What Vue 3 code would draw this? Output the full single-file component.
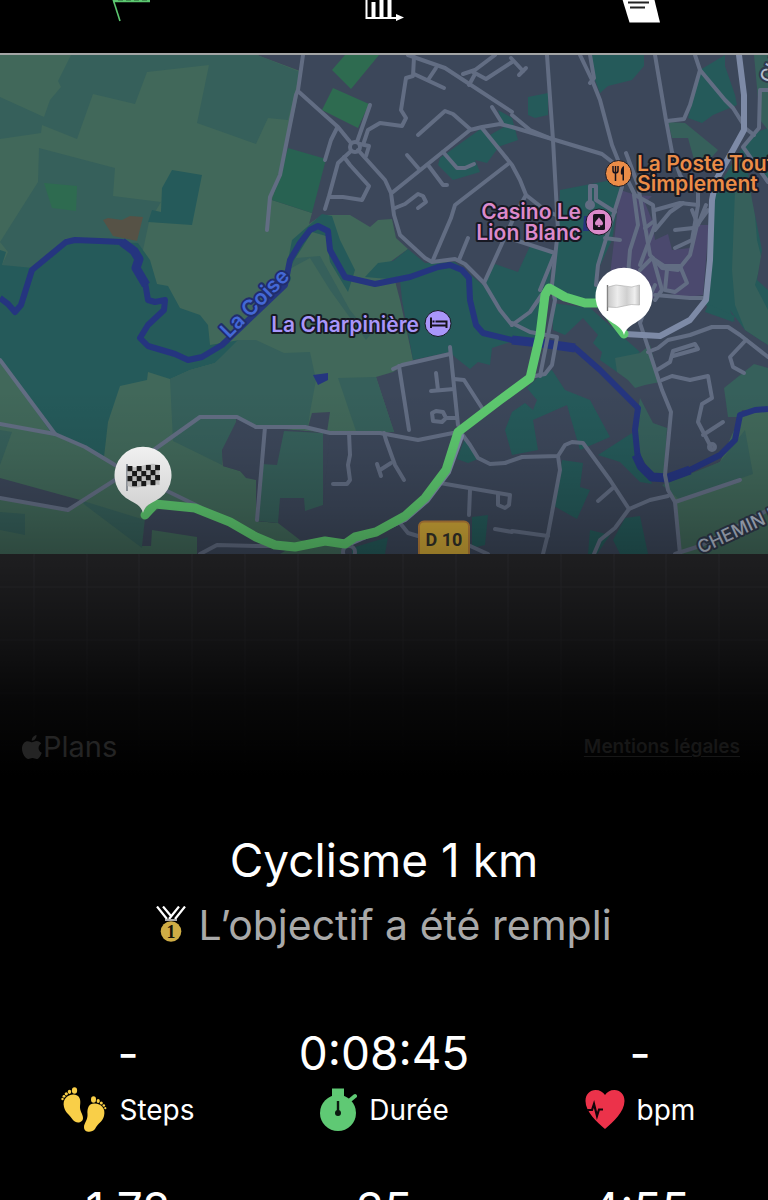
<template>
  <main class="app">
    <nav class="tabs" aria-label="Sections">
      <button type="button" class="tab active" aria-label="Parcours">
        <svg width="56" height="24" viewBox="100 0 56 24">
          <path d="M112 -4L120 21" stroke="#5cc770" stroke-width="1.6" fill="none" />
          <path d="M113 1H150" stroke="#5cc770" stroke-width="2.4" />
          <path d="M118 0H149" stroke="#245c30" stroke-width="1" stroke-dasharray="5 3" />
        </svg>
      </button>
      <button type="button" class="tab" aria-label="Statistiques">
        <svg width="56" height="24" viewBox="356 0 56 24">
          <path d="M366.5 0V18H397" stroke="#fff" stroke-width="2" fill="none" />
          <path d="M373.500 2V17M381.500 0V17M389.500 0V17" stroke="#fff" stroke-width="4" />
          <path d="M396 14L404 17.500L396 21Z" fill="#fff" />
        </svg>
      </button>
      <button type="button" class="tab" aria-label="Notes">
        <svg width="56" height="24" viewBox="612 0 56 24">
          <path d="M622 -2H654L660 22.500H629.500Z" fill="#fff" />
          <path d="M628 2.500H649M630 7.500H645" stroke="#222" stroke-width="2" />
        </svg>
      </button>
    </nav>

    <section class="map">
      <svg class="map-canvas" viewBox="0 55 768 725">
        <defs>
          <linearGradient id="fade" gradientUnits="userSpaceOnUse" x1="0" y1="390" x2="0" y2="775">
            <stop offset="0" stop-color="#000" stop-opacity="0" />
            <stop offset=".15" stop-color="#000" stop-opacity=".06" />
            <stop offset=".31" stop-color="#000" stop-opacity=".18" />
            <stop offset=".43" stop-color="#000" stop-opacity=".3" />
            <stop offset=".65" stop-color="#000" stop-opacity=".58" />
            <stop offset=".81" stop-color="#000" stop-opacity=".83" />
            <stop offset="1" stop-color="#000" />
          </linearGradient>
          <linearGradient id="cloth" x1="0" x2="1" y1="0" y2="0">
            <stop offset="0" stop-color="#c9c9c9" />
            <stop offset=".3" stop-color="#ececec" />
            <stop offset=".6" stop-color="#cfcfcf" />
            <stop offset=".85" stop-color="#efefef" />
            <stop offset="1" stop-color="#c4c4c4" />
          </linearGradient>
          <clipPath id="tiles"><rect x="0" y="55" width="768" height="499" /></clipPath>
        </defs>

        <rect x="0" y="554" width="768" height="226" fill="#2b2b2e" />
        <path v-for="x in gridX" :key="'x' + x" :d="`M${x} 554V780`" class="grid" />
        <path v-for="y in gridY" :key="'y' + y" :d="`M0 ${y}H768`" class="grid" />

        <g clip-path="url(#tiles)">
          <rect x="0" y="55" width="768" height="499" fill="#3c475a" />
          <polygon v-for="(zone, i) in zones" :key="'z' + i" :points="zone[1]" :class="zone[0]" />
          <polyline :points="river" class="river" />
          <polyline points="122,242 134,251 139,259 136,268 146,285" class="river wide" />
          <polyline points="512,340 540,343 575,348" class="river wide" />
          <polyline points="636,455 641,466 652,477 668,478 690,470" class="river wide" />
          <polyline v-for="(road, i) in roads" :key="'r' + i" :points="road" class="road" />
          <circle v-for="c in roundabouts" :key="c[0]" :cx="c[0]" :cy="c[1]" :r="c[2]" class="road" />
          <polyline v-for="(road, i) in mainRoads" :key="'m' + i" :points="road" class="road main" />
          <polyline :points="route" class="route" />

          <g class="label river-name"><text transform="translate(229 339) rotate(-45)">La Coise</text></g>
          <g class="label street">
            <text transform="translate(701 554) rotate(-25)">CHEMIN DE</text>
            <text transform="translate(770 84) rotate(-62)">CHEMIN</text>
          </g>

          <g class="label hotel">
            <text x="419" y="332" text-anchor="end">La Charpinière</text>
            <circle cx="438" cy="323.500" r="13" />
            <path d="M431 317.500V328M431 325.500H446.500V328M446.500 325.500V321.500H435.500M432.500 321.500H434.500" class="glyph" />
          </g>
          <g class="label casino">
            <text x="581" y="219" text-anchor="end">Casino Le</text>
            <text x="581" y="240" text-anchor="end">Lion Blanc</text>
            <circle cx="599" cy="222" r="13" />
            <rect x="593" y="214" width="12" height="16" rx="1.500" fill="#17121c" stroke="none" />
            <path d="M599 217C598 219.500 595 221 595 223.500C595 225.500 597.500 226 598.500 224.700L597.700 227H600.300L599.500 224.700C600.500 226 603 225.500 603 223.500C603 221 600 219.500 599 217Z" />
          </g>
          <g class="label food">
            <text x="637" y="171">La Poste Tout</text>
            <text x="637" y="191">Simplement</text>
            <circle cx="618.500" cy="173.500" r="13" />
            <path d="M613 166V170.500Q613 173 615.500 173T618 170.500V166M615.500 166V181" class="glyph thin" />
            <path d="M624 166C621 167 620.500 171 621 174.500H622.500V180.500H624Z" fill="#17121c" />
          </g>
          <g>
            <rect x="419" y="521.500" width="50" height="40" rx="5" fill="#d1a938" stroke="#b9803a" stroke-width="2" />
            <text x="444" y="546" text-anchor="middle" class="badge">D 10</text>
          </g>

          <g class="pin">
            <path d="M143 513C141 505 134 503 126 498A28.500 28.500 0 1 1 160 498C152 503 145 505 143 513Z" />
            <path d="M127 464V491" stroke="#8b929c" stroke-width="1.600" />
            <path d="M127.500 466Q135 468.500 143 465.500T159.500 465V485Q151 483 143 486T127.500 486Z" fill="#d4d4d4" />
            <rect v-for="s in checks" :key="s.x + '-' + s.y" :x="s.x" :y="s.y" width="4.900" height="5.200" fill="#1c1c1c" />
          </g>
          <g class="pin">
            <path d="M624 335C622 327 615 325 607 319A28.500 28.500 0 1 1 641 319C633 325 626 327 624 335Z" />
            <path d="M607.500 285V311" stroke="#777" stroke-width="1.400" />
            <path d="M608 287Q616 283.500 624 286T639.500 285V305Q631 303.500 624 306T608 307Z" fill="url(#cloth)" stroke="#aaa" stroke-width=".6" />
          </g>
        </g>

        <rect x="0" y="390" width="768" height="390" fill="url(#fade)" />
      </svg>

      <footer class="credits">
        <span class="brand">
          <svg width="20" height="25" viewBox="0 0 20 25">
            <path d="M14.500 0C14.800 3 12.400 5.800 9.800 5.700C9.500 3 12 .3 14.500 0ZM10 7.300C11.200 7.300 12.500 6 14.700 6C16.600 6 18.200 7 19.200 8.400C15.300 10.700 16 16.200 19.800 17.700C18.800 20.500 16.900 24 14.700 24C13.100 24 12.500 23 10.500 23C8.500 23 7.900 24 6.400 24C3.500 24 0 18.500 0 13.500C0 8.800 2.900 6.200 5.700 6.200C7.600 6.200 9 7.300 10 7.300Z" />
          </svg>
          <span>Plans</span>
        </span>
        <a href="#mentions">Mentions légales</a>
      </footer>
    </section>

    <section class="summary">
      <h1>Cyclisme 1 km</h1>
      <p class="goal">
        <svg width="30" height="38" viewBox="0 0 30 38">
          <path d="M1 .5L11 13M7 .5L15 10M29 .5L19 13M23 .5L13 13" stroke="#fff" stroke-width="2.200" />
          <path d="M9 14H21" stroke="#aaa" stroke-width="2" />
          <circle cx="15" cy="25.500" r="10.300" fill="#cfad45" />
          <text x="15" y="32" text-anchor="middle" class="rank">1</text>
        </svg>
        <span>L’objectif a été rempli</span>
      </p>
    </section>

    <section class="stats">
      <div class="stat">
        <div class="value">-</div>
        <div class="name">
          <svg width="46" height="46" viewBox="0 0 46 46" fill="#f9cf48">
            <path d="M3 20C1 12 7 7 13 7.500C19 8 20 13 19 19C18.500 24 22 27 22 31C22 36 15 37 12 33C8 27 4.500 26 3 20Z" />
            <ellipse cx="13.500" cy="3.500" rx="2.600" ry="3.300" />
            <ellipse cx="8.500" cy="4.800" rx="1.700" ry="2.100" />
            <circle cx="5.300" cy="6.800" r="1.600" />
            <circle cx="3" cy="9.300" r="1.400" />
            <circle cx="1.500" cy="12" r="1.200" />
            <path d="M43 29C45 21 40 17 34 16.500C28 16 26 21 26.500 27C27 33 23 36 23 40C23 46 31 46 34 42C37 36 41.500 35 43 29Z" />
            <ellipse cx="32.500" cy="12.500" rx="2.500" ry="3.200" />
            <ellipse cx="37.200" cy="14" rx="1.600" ry="2.100" />
            <circle cx="40.300" cy="16" r="1.500" />
            <circle cx="42.800" cy="18.500" r="1.300" />
            <circle cx="44.300" cy="21.200" r="1.100" />
          </svg>
          <span>Steps</span>
        </div>
      </div>
      <div class="stat">
        <div class="value">0:08:45</div>
        <div class="name">
          <svg width="38" height="46" viewBox="0 0 38 46">
            <path d="M13 1.500H25V12H13Z" fill="#5fc974" />
            <circle cx="19" cy="26" r="18" fill="#5fc974" />
            <path d="M30 14L36 9" stroke="#5fc974" stroke-width="4" stroke-linecap="round" />
            <path d="M19 14V25" stroke="#0c1a10" stroke-width="2.400" />
            <circle cx="19" cy="26" r="3" fill="#0c1a10" />
          </svg>
          <span>Durée</span>
        </div>
      </div>
      <div class="stat">
        <div class="value">-</div>
        <div class="name">
          <svg width="40" height="46" viewBox="0 0 40 46">
            <path d="M20 42C12 35 .5 25 .5 14C.5 7 5 3 10.500 3C15 3 18 5 20 8C22 5 25 3 29.500 3C35 3 39.500 7 39.500 14C39.500 25 28 35 20 42Z" fill="#ec324a" />
            <path d="M2 23H7L9 17L12 29L14 22.500H18" fill="none" stroke="#120408" stroke-width="2.200" />
          </svg>
          <span>bpm</span>
        </div>
      </div>
      <div class="stat"><div class="value">1,78</div></div>
      <div class="stat"><div class="value">35</div></div>
      <div class="stat"><div class="value">4:55</div></div>
    </section>
  </main>
</template>

<script setup>
// Cuadricula vacia debajo de las teselas
const gridX = Array.from({ length: 14 }, (_, i) => 34 + Math.round(i * 52.7))
const gridY = [587, 640, 693, 745]

// Zonas del mapa: [clase, puntos]
const zones = [
  ['field', '0,55 257,55 300,71 298,95 280,178 272,200 312,213 309,224 322,215 350,215 370,227 378,220 392,219 396,238 408,249 390,262 400,300 413,360 393,372 376,377 394,432 330,433 256,427 236,418 235,435 222,450 223,466 240,471 246,478 256,480 257,521 278,523 300,540 345,545 345,554 0,554'],
  ['meadow', '71,55 58,81 61,87 50,100 44,117 0,97 0,139 41,133 42,125 77,139 93,94 135,104 147,72 209,65 197,123 256,144 268,118 288,120 300,72 257,55'],
  ['meadow', '39,148 115,168 113,196 161,202 149,222 143,250 125,240 66,238 33,270 2,265 8,252 0,242 38,182'],
  ['wood', '0,250 6,252 2,265 33,268 66,240 138,243 150,260 157,284 168,286 180,308 200,315 208,325 210,345 240,340 215,363 190,370 170,379 148,372 147,380 120,386 108,422 104,457 52,434 0,360'],
  ['meadow', '170,379 190,370 215,363 238,340 256,340 284,353 310,352 316,380 310,412 308,427 256,427 236,418 234,440 222,450 222,465 173,441'],
  ['meadow', '338,378 376,377 394,432 356,431'],
  ['meadow', '284,272 296,258 320,256 350,310 370,335 366,340 330,290 310,258'],
  ['town', '312,413 330,412 327,432 308,427'],
  ['meadow', '0,430 12,432 0,465'],
  ['town', '0,478 80,500 68,511 0,498'],
  ['meadow', '0,512 25,514 25,535 0,530'],
  ['meadow', '80,500 145,520 142,548 85,505'],
  ['town', '145,518 160,508 200,510 260,540 290,548 280,554 197,554 197,537 152,530 151,546 142,546'],
  ['town', '236,422 256,427 330,433 323,505 305,511 304,498 280,498 278,523 256,521 256,480 240,471 223,466 222,450'],
  ['meadow', '284,431 323,433 323,505 305,511 304,498 280,498 278,523 258,521 262,464 277,465'],
  ['wood', '172,170 202,175 192,225 148,222 152,210 161,212 162,188'],
  ['soil', '103,220 108,218 122,220 130,216 143,217 137,241 113,236'],
  ['park', '44,183 77,186 76,211 52,208'],
  ['park', '332,70 345,55 379,55 351,89'],
  ['park', '333,88 369,104 358,128 322,110'],
  ['grove', '288,148 326,159 312,213 272,200'],
  ['wood', '292,240 322,214 332,216 340,240 355,270 348,292 330,262 326,236 312,232 285,275'],
  ['wood', '365,277 378,263 393,261 408,249 425,263 455,262 483,285 495,264 518,272 530,246 553,250 548,300 540,345 510,342 492,348 490,365 478,362 470,369 456,358 450,352 413,360 402,300 400,280'],
  ['wood', '560,190 622,178 612,240 598,270 597,300 552,300 558,230'],
  ['wood', '552,303 590,308 640,352 617,372 600,360 602,352 593,343 598,335 583,318 565,335 553,330'],
  ['meadow', '617,372 615,358 640,353 650,345 660,382 645,385 635,388 628,380'],
  ['wood', '552,370 565,390 590,400 610,437 580,450 567,405 533,420 538,450 512,455 505,430 512,412 525,403 533,410 537,400 527,388 540,375'],
  ['wood', '598,455 632,433 640,450 652,484 640,482 620,462'],
  ['meadow', '640,398 653,423 667,428 664,475 650,472 638,450 638,410'],
  ['wood', '562,460 583,463 580,487 590,490 577,519 554,506'],
  ['wood', '590,530 610,535 597,554 588,554'],
  ['wood', '613,540 625,518 640,516 648,554 620,554'],
  ['meadow', '724,388 754,364 768,368 768,410 742,410 740,417 728,417'],
  ['field', '742,412 768,410 768,554 680,554 675,502 666,486 720,462'],
  ['meadow', '662,485 720,462 745,430 753,474 680,500'],
  ['wood', '713,195 742,148 757,132 768,128 768,345 745,330 730,310 735,322 720,310 705,305 710,260'],
  ['meadow', '735,190 752,180 757,240 762,260 755,285 768,310 768,345 745,330 735,305 732,270'],
  ['town', '745,152 768,182 768,290 757,280 762,250 752,200'],
  ['meadow', '754,55 768,55 768,130 760,120'],
  ['wood', '708,304 735,316 733,322 722,318 705,312'],
  ['wood', '592,55 644,55 644,66 632,80 608,86 600,93 591,70'],
  ['wood', '700,70 725,55 725,66 735,95 737,105 713,115 702,123 688,118'],
  ['meadow', '668,122 685,123 718,150 705,165 695,163 688,138 672,138'],
  ['wood', '528,97 548,93 548,115 535,118 528,115'],
  ['wood', '440,158 482,128 498,148 487,163 475,160 480,172 453,180 438,165'],
  ['wood', '490,135 504,127 498,110 512,118 518,140 495,148'],
  ['wood', '472,517 488,515 485,545 472,548'],
  ['wood', '352,548 388,537 385,554 352,554'],
  ['wood', '457,459 465,438 478,459 468,463'],
  ['shops', '610,275 620,190 636,195 652,196 645,203 652,220 655,240 668,234 672,250 690,248 698,225 709,225 703,295 680,298 665,290 650,300 640,275 640,290 612,280'],
  ['water', '313,375 328,373 328,380 318,385'],
  ['water', '584,216 590,216 590,231 583,231']
]

const river = '0,298 8,304 15,312 21,305 32,270 66,242 75,240 100,241 122,242 134,251 138,258 136,267 145,282 148,300 155,302 165,300 164,310 148,325 140,338 148,346 175,354 188,360 202,357 222,345 240,328 285,285 290,260 300,243 310,230 318,226 328,231 330,250 345,277 375,284 410,277 438,267 450,265 462,270 469,278 470,300 476,325 483,333 512,340 540,343 575,348 600,370 638,408 635,430 638,460 650,476 665,478 690,470 720,455 735,440 740,415 755,410 768,409'

const route = '145,515 155,504 195,508 230,522 256,537 275,545 295,547 325,541 345,544 355,537 376,532 405,516 425,498 446,470 458,432 500,400 530,378 540,335 545,295 549,288 565,297 585,303 600,303 624,334'

const roads = [
  '303,55 298,90 296,95 280,175 270,197 267,230',
  '299,92 338,127 351,143', '358,150 385,180 391,193 394,215 400,235 425,258 432,262 455,259 465,264 484,283 500,310 512,325',
  '370,105 357,142', '364,142 368,130 380,123 402,126 406,118 401,110 406,78 413,76 414,57',
  '414,74 444,88', '436,68 428,80', '337,128 331,140 325,160',
  '351,151 338,163 329,196 325,209', '329,197 343,197 362,200 369,186 350,165 344,157',
  '360,144 369,146 366,156', '395,208 405,204 418,194 423,196 426,202 418,208',
  '393,192 470,130 482,127 500,124 512,127 552,139', '418,135 445,111 453,114 470,129',
  '407,155 419,169', '428,165 443,185 447,185', '443,152 457,168 465,168 474,164',
  '482,128 512,165 520,180 526,195 545,210 558,216', '508,164 455,205 451,218 433,260',
  '468,238 459,260', '526,195 515,215 484,283', '515,240 555,253 540,290',
  '492,107 502,123', '463,74 475,70 495,55', '473,72 486,79 512,62', '475,74 469,85',
  '511,58 523,71', '526,68 519,75', '408,55 445,68 512,112',
  '512,115 530,130 552,139 602,154 620,168', '547,55 553,140 558,230 552,285',
  '580,55 592,80 600,100 612,145 620,165 635,195 653,205 655,225 640,265', '590,55 594,78 590,83',
  '655,55 666,120 672,152 680,175 690,190', '667,121 684,119 690,105 700,70 695,55',
  '700,70 725,100 733,108 745,127', '768,90 760,90 759,128 743,147 768,182',
  '745,128 754,135', '626,153 638,185 650,255 662,268 678,270 690,255 697,225 708,210',
  '622,187 598,265 596,285', '634,195 638,225 630,250 628,275',
  '655,210 680,203 698,205 698,185', '655,230 670,212 683,203', '698,205 692,240 675,248',
  '675,230 693,228', '645,228 653,222', '640,270 652,258 664,266 680,266 687,283 675,292 665,290 667,270',
  '653,258 662,290 655,300', '655,295 690,298 703,298', '590,205 590,186 596,186 596,200 615,212',
  '605,238 620,240', '692,210 698,225 706,205',
  '640,323 662,390 671,412 665,475 668,490 675,502 680,554', '675,502 740,480',
  '629,509 650,500 668,496', '648,352 658,348 668,340 690,335 712,327 728,327 740,335 768,357',
  '657,370 670,362 673,351 695,344 698,349 673,356', '662,380 672,376 690,380 708,376 712,398 702,404 698,422 711,447',
  '703,435 723,422', '746,340 730,357 733,367 744,373',
  '505,463 522,457 558,456 565,445 572,442 583,443 610,480 629,509 615,528 600,540 594,554',
  '558,456 560,470 548,534 543,554', '512,531 548,536', '614,487 598,501',
  '512,323 530,332 557,337 552,365 545,374 535,376', '545,290 530,312 512,325', '640,323 648,300 655,285',
  '256,427 305,427 330,433 380,433 418,440 458,432', '155,449 200,417 237,417 256,427',
  '393,369 402,365 450,354', '450,347 458,425', '399,366 409,430', '436,373 438,390',
  '431,391 454,389', '454,379 464,380 482,408', '457,418 446,418 442,422 433,421 432,413 436,411 443,412 446,418',
  '349,433 350,455 348,465 350,480 347,484 333,484', '384,433 386,440 395,465 404,480',
  '377,464 381,476', '380,470 391,463', '265,427 257,520',
  '462,434 470,445 478,458 490,464 505,463', '440,483 510,495 509,505 505,508 498,505 498,494',
  '470,490 469,515', '400,523 408,533 418,536', '468,545 488,554', '495,529 512,532',
  '0,360 55,434', '0,424 55,434 85,447 115,465', '0,498 68,510 115,480', '165,490 200,507',
  '200,554 217,545 256,546 290,546', '675,554 700,546 768,510', '552,285 555,300 540,376'
]

const mainRoads = [
  '739,55 744,95 744,130 733,150 716,180 712,200 710,260 706,300 690,320 660,336 625,334',
  '459,435 461,436 448,472 427,500 405,519 352,542'
]

const roundabouts = [[355, 147, 5], [590, 205, 3], [712, 447, 3], [349, 552, 6]]

// Cuadros negros de la bandera de llegada
const checks = []
for (let row = 0; row < 4; row++) {
  for (let col = 0; col < 7; col++) {
    if ((row + col) % 2 === 0) {
      checks.push({ x: 127.5 + col * 4.6, y: 466 + row * 5 - (col > 3 ? 1 : 0) })
    }
  }
}
</script>

<style scoped>
.app {
  height: 100vh;
  overflow: hidden;
  background: #000;
  color: #fff;
  font-family: Inter, Roboto, sans-serif;
}

/* Barra superior */
.tabs {
  display: grid;
  grid-template-columns: repeat(3, 1fr);
  height: 53px;
  border-bottom: 2px solid #a3a5a5;
}

.tab {
  display: flex;
  justify-content: center;
  align-items: flex-start;
  padding: 0;
  border: none;
  background: none;
}

/* Mapa */
.map {
  position: relative;
}

.map-canvas {
  display: block;
  width: 100%;
  height: auto;
}

.grid {
  stroke: #37373a;
  stroke-width: 1;
}

.field { fill: #41685a; }
.meadow { fill: #36605b; }
.wood { fill: #255a5a; }
.town { fill: #3c475a; }
.park { fill: #2e6b50; }
.grove { fill: #286252; }
.soil { fill: #565246; }
.shops { fill: #4b496e; }
.water { fill: #25357f; }

.river {
  fill: none;
  stroke: #25357f;
  stroke-width: 6;
  stroke-linejoin: round;
}

.river.wide {
  stroke-width: 9;
}

.road {
  fill: none;
  stroke: #626d83;
  stroke-width: 4;
  stroke-linecap: round;
  stroke-linejoin: round;
}

.road.main {
  stroke: #7d8aa6;
  stroke-width: 6;
}

.route {
  fill: none;
  stroke: #5dc86f;
  stroke-width: 9;
  stroke-linecap: round;
  stroke-linejoin: round;
}

.label text {
  font-size: 21px;
  font-weight: 600;
  stroke: #171923;
  stroke-width: 4px;
  stroke-linejoin: round;
  paint-order: stroke;
}

.label circle {
  stroke: #171923;
  stroke-width: 1;
}

.hotel { fill: #a996fa; }
.casino { fill: #dc8acb; }
.food { fill: #eb8c47; }
.river-name { fill: #4468d6; }
.street { fill: #b3bccd; }

.river-name text {
  stroke: #202d6c;
}

.street text {
  font-size: 18px;
  font-weight: 500;
  stroke: #303a4c;
}

.glyph {
  fill: none;
  stroke: #17121c;
  stroke-width: 2;
}

.glyph.thin {
  stroke-width: 1.5;
}

.badge {
  font-family: Roboto, sans-serif;
  font-size: 18px;
  font-weight: 700;
  fill: #33322a;
}

.pin {
  fill: #fff;
}

.credits {
  position: absolute;
  left: 22px;
  right: 28px;
  bottom: 16px;
  display: flex;
  justify-content: space-between;
  align-items: center;
  line-height: 34px;
}

.brand {
  display: flex;
  align-items: center;
  gap: 1px;
  font-size: 29px;
  color: #242424;
}

.brand svg {
  fill: #242424;
}

.credits a {
  font-size: 19px;
  font-weight: 600;
  color: #171717;
  text-underline-offset: 3px;
}

/* Resumen */
.summary {
  padding-top: 50px;
  text-align: center;
}

h1 {
  margin: 0;
  font-size: 46px;
  font-weight: 400;
  line-height: 60px;
}

.goal {
  display: flex;
  justify-content: center;
  align-items: center;
  gap: 12px;
  margin: 5px 0 0;
  font-size: 41px;
  line-height: 60px;
  color: #a9a9a9;
}

.rank {
  font-family: "Liberation Serif", serif;
  font-size: 18px;
  font-weight: 700;
  fill: #151208;
}

/* Datos */
.stats {
  display: grid;
  grid-template-columns: repeat(3, 1fr);
  row-gap: 42px;
  margin-top: 68px;
}

.stat {
  text-align: center;
}

.value {
  font-size: 46px;
  line-height: 60px;
}

.name {
  display: flex;
  justify-content: center;
  align-items: center;
  gap: 12px;
  height: 54px;
  font-size: 28px;
}
</style>

<style>
body {
  background: #000;
}
</style>
